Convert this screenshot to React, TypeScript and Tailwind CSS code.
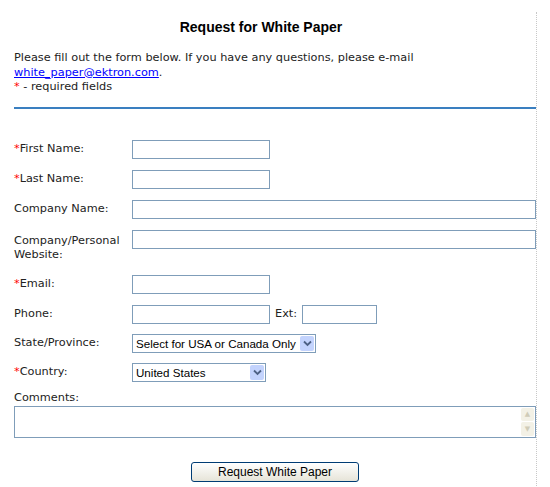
import React from "react";

type RowProps = {
  label: React.ReactNode;
  required?: boolean;
  children: React.ReactNode;
  className?: string;
};

function Row({ label, required, children, className }: RowProps) {
  return (
    <div className={`flex items-center ${className ?? ""}`}>
      <label className="w-[118px] shrink-0 leading-[14px]">
        {required && <span className="text-[#ff0000]">*</span>}
        {label}
      </label>
      {children}
    </div>
  );
}

const inputCls =
  "h-[19px] border border-[#7f9db9] bg-white px-[2px] text-[12px] font-['Liberation_Sans'] outline-none";

function Chevron() {
  return (
    <svg width="9" height="7" viewBox="0 0 9 7">
      <path d="M1 1.5 L4.5 5 L8 1.5" fill="none" stroke="#4d6185" strokeWidth="1.8" />
    </svg>
  );
}

function FakeSelect({ value, width }: { value: string; width: string }) {
  return (
    <div className={`relative h-[19px] ${width}`}>
      <select
        defaultValue={value}
        className="h-full w-full appearance-none border border-[#7f9db9] bg-white pl-[3px] text-[11.6px] font-['Liberation_Sans'] text-black outline-none"
      >
        <option>{value}</option>
      </select>
      <span className="pointer-events-none absolute right-[2px] top-[2px] flex h-[15px] w-[14px] items-center justify-center rounded-[2px] bg-[#c3d3fd]">
        <Chevron />
      </span>
    </div>
  );
}

export default function App() {
  return (
    <div className="min-h-[487px] bg-white">
      <div className="mt-[12px] w-[537px] border-r border-dotted border-[#c8c8c8] pb-[10px] pl-[14px] font-['DejaVu_Sans'] text-[11.3px] text-[#222]">
        <h1 className="pr-[28px] pt-[7px] text-center font-['Liberation_Sans'] text-[14px] font-bold leading-[17px] text-black">
          Request for White Paper
        </h1>
        <p className="mt-[15px] leading-[14.5px]">
          Please fill out the form below. If you have any questions, please e-mail
          <br />
          <a href="#" className="text-[#0000ff] underline">
            white_paper@ektron.com
          </a>
          .
          <br />
          <span className="text-[#ff0000]">*</span> - required fields
        </p>
        <div className="mt-[12px] h-[2px] bg-[#3a7fc0]" />

        <form className="mt-[31px] flex flex-col">
          <Row label="First Name:" required>
            <input className={`${inputCls} w-[138px]`} />
          </Row>
          <Row label="Last Name:" required className="mt-[11px]">
            <input className={`${inputCls} w-[138px]`} />
          </Row>
          <Row label="Company Name:" className="mt-[11px]">
            <input className={`${inputCls} flex-1`} />
          </Row>
          <div className="mt-[11px] flex items-start">
            <label className="w-[118px] shrink-0 pt-[4px] leading-[14px]">
              Company/Personal
              <br />
              Website:
            </label>
            <input className={`${inputCls} flex-1`} />
          </div>
          <Row label="Email:" required className="mt-[13px]">
            <input className={`${inputCls} w-[138px]`} />
          </Row>
          <Row label="Phone:" className="mt-[11px]">
            <input className={`${inputCls} w-[138px]`} />
            <span className="ml-[5px] mr-[5px]">Ext:</span>
            <input className={`${inputCls} w-[75px]`} />
          </Row>
          <Row label="State/Province:" className="mt-[10px]">
            <FakeSelect value="Select for USA or Canada Only" width="w-[184px]" />
          </Row>
          <Row label="Country:" required className="mt-[10px]">
            <FakeSelect value="United States" width="w-[134px]" />
          </Row>
          <label className="mt-[9px] leading-[14px]">Comments:</label>
          <div className="mt-[1px] flex h-[32px] border border-[#7f9db9] bg-white">
            <textarea className="flex-1 resize-none px-[2px] text-[12px] outline-none" />
            <div className="flex w-[15px] flex-col gap-[1px] p-[1px]">
              <span className="flex flex-1 items-center justify-center rounded-[2px] bg-[#f3f1e6] text-[7px] text-[#d0ccb8]">
                ▲
              </span>
              <span className="flex flex-1 items-center justify-center rounded-[2px] bg-[#f3f1e6] text-[7px] text-[#d0ccb8]">
                ▼
              </span>
            </div>
          </div>
          <div className="mt-[24px] flex justify-center">
            <button
              type="button"
              className="h-[20px] w-[168px] rounded-[3px] border border-[#003c74] bg-gradient-to-b from-white to-[#e6e4d8] font-['Liberation_Sans'] text-[12px] text-black"
            >
              Request White Paper
            </button>
          </div>
        </form>
      </div>
    </div>
  );
}
